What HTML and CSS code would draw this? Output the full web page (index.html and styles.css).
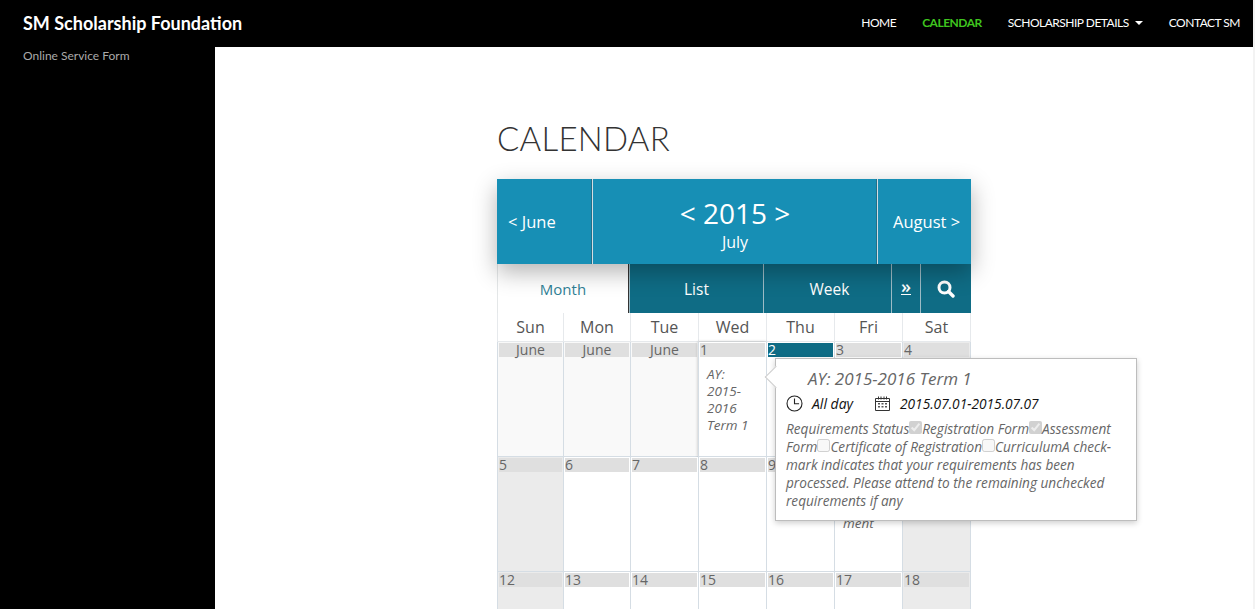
FILE: index.html
```html
<!doctype html>
<html lang="en">

<head>
	<meta charset="UTF-8">
	<title>Calendar - SM Scholarship Foundation</title>
	<link rel="stylesheet" href="styles.css">
</head>

<body>
	<header class="topbar">
		<a class="brand">SM Scholarship Foundation</a>
		<nav class="menu">
			<a>Home</a>
			<a class="current">Calendar</a>
			<a class="has-sub">Scholarship Details</a>
			<a>Contact SM</a>
		</nav>
	</header>

	<div class="shell">
		<aside class="sidebar">
			<p>Online Service Form</p>
		</aside>

		<main class="content">
			<h1>Calendar</h1>

			<section class="cal">
				<div class="cal-nav">
					<a class="prev">&lt; June</a>
					<div class="now">
						<div class="year">&lt; 2015 &gt;</div>
						<div class="month">July</div>
					</div>
					<a class="next">August &gt;</a>
				</div>

				<div class="cal-tabs">
					<a class="tab-month active">Month</a>
					<a class="tab-list">List</a>
					<a class="tab-week">Week</a>
					<a class="tab-more">&raquo;</a>
					<a class="tab-search">
						<svg width="18" height="18" viewBox="0 0 18 18">
							<circle cx="7.500" cy="7.500" r="5.500" fill="none" stroke="#fff" stroke-width="3" />
							<path d="M11.500 11.500 16 16" stroke="#fff" stroke-width="3.400" stroke-linecap="round" />
						</svg>
					</a>
				</div>

				<div class="days">
					<div>Sun</div>
					<div>Mon</div>
					<div>Tue</div>
					<div>Wed</div>
					<div>Thu</div>
					<div>Fri</div>
					<div>Sat</div>
				</div>

				<div class="weeks">
					<div class="cell other"><span class="num">June</span></div>
					<div class="cell other"><span class="num">June</span></div>
					<div class="cell other"><span class="num">June</span></div>
					<div class="cell open"><span class="num left">1</span>
						<p class="ev">AY:<br>2015-<br>2016<br>Term 1</p>
					</div>
					<div class="cell"><span class="num left today">2</span></div>
					<div class="cell"><span class="num left">3</span></div>
					<div class="cell sat"><span class="num left">4</span></div>

					<div class="cell sun"><span class="num left">5</span></div>
					<div class="cell"><span class="num left">6</span></div>
					<div class="cell"><span class="num left">7</span></div>
					<div class="cell"><span class="num left">8</span></div>
					<div class="cell"><span class="num left">9</span></div>
					<div class="cell"><span class="num left">10</span>
						<p class="ev low">ment</p>
					</div>
					<div class="cell sat"><span class="num left">11</span></div>

					<div class="cell sun"><span class="num left">12</span></div>
					<div class="cell"><span class="num left">13</span></div>
					<div class="cell"><span class="num left">14</span></div>
					<div class="cell"><span class="num left">15</span></div>
					<div class="cell"><span class="num left">16</span></div>
					<div class="cell"><span class="num left">17</span></div>
					<div class="cell sat"><span class="num left">18</span></div>
				</div>

				<div class="pop">
					<h3>AY: 2015-2016 Term 1</h3>
					<div class="when">
						<svg width="17" height="17" viewBox="0 0 17 17">
							<circle cx="8.500" cy="8.500" r="7.500" fill="none" stroke="#222" stroke-width="1.100" />
							<path d="M8.500 3.500v5.200h4.600" fill="none" stroke="#222" stroke-width="1.100" />
						</svg>
						<span class="allday">All day</span>
						<svg width="15" height="15" viewBox="0 0 15 15">
							<path d="M.5 2.500h14v12H.5z" fill="none" stroke="#333" />
							<path d="M.5 5.500h14M3.500 .5v3M6 .5v3M9 .5v3M11.500 .5v3" fill="none" stroke="#333" />
							<path d="M3 7h2v1.500H3zM6.500 7h2v1.500h-2zM10 7h2v1.500h-2zM3 10h2v1.500H3zM6.500 10h2v1.500h-2zM10 10h2v1.500h-2z" fill="#555" />
						</svg>
						<span class="range">2015.07.01-2015.07.07</span>
					</div>
					<p>Requirements Status<input type="checkbox" checked disabled>Registration Form<input type="checkbox" checked disabled>Assessment Form<input type="checkbox" disabled>Certificate of Registration<input type="checkbox" disabled>CurriculumA check-mark indicates that your requirements has been processed. Please attend to the remaining unchecked requirements if any</p>
				</div>
			</section>
		</main>
	</div>
</body>

</html>
```

FILE: styles.css
```css
html,
body {
	height: 100%;
	overflow: hidden;
}

body {
	margin: 0;
	padding-right: 2px;
	background: #f3f3f3;
	font: 14px "Lato", sans-serif;
}

.topbar {
	display: flex;
	justify-content: space-between;
	align-items: center;
	height: 45px;
	padding: 0 13px 2px 23px;
	background: #000;
	color: #fff;
}

.brand {
	font-size: 18px;
	font-weight: 700;
}

.menu {
	display: flex;
	gap: 26px;
	font-size: 12px;
	letter-spacing: -.5px;
	text-transform: uppercase;
}

.menu .current {
	color: #3fc51f;
	font-weight: 700;
}

.has-sub::after {
	content: "";
	display: inline-block;
	margin-left: 6px;
	vertical-align: 2px;
	border: 4px solid transparent;
	border-top-color: #fff;
	border-bottom: 0;
}

.shell {
	display: flex;
	height: 562px;
}

.sidebar {
	width: 215px;
	flex: none;
	background: #000;
	color: #aaa;
	font-size: 12px;
}

.sidebar p {
	margin: 1px 0 0 23px;
}

.content {
	flex: 1;
	background: #fff;
	padding: 0 0 0 282px;
	font-family: "Open Sans", sans-serif;
}

.content h1 {
	margin: 0;
	padding-top: 71px;
	height: 61px;
	font: 300 33px/40px "Lato", sans-serif;
	letter-spacing: .25px;
	color: #333;
	text-transform: uppercase;
}

.cal {
	position: relative;
	width: 474px;
}

.cal-nav {
	position: relative;
	z-index: 1;
	display: flex;
	height: 85px;
	background: #178fb5;
	color: #fff;
	box-shadow: 0 8px 22px rgba(0, 0, 0, .3);
}

.cal-nav a {
	font-size: 16.500px;
	line-height: 86px;
}

.prev {
	box-sizing: border-box;
	width: 95px;
	padding-left: 11px;
}

.next {
	box-sizing: border-box;
	width: 93px;
	padding-left: 15px;
}

.now {
	flex: 1;
	border: solid #d3dde2;
	border-width: 0 1px;
	box-shadow: -1px 0 0 #226f88, inset -1px 0 0 #226f88;
	text-align: center;
}

.year {
	margin-top: 17px;
	font-size: 28px;
	line-height: 35px;
}

.month {
	font-size: 16px;
	line-height: 22px;
}

.cal-tabs {
	display: flex;
	height: 49px;
	background: #0f6c85;
	color: #fff;
	font-size: 15.500px;
	line-height: 50px;
	text-align: center;
}

.cal-tabs a {
	box-sizing: border-box;
	border-left: 1px solid #9dbcc6;
}

.cal-tabs .active {
	background: #fff;
	color: #2f7f96;
	font-size: 15px;
	border-left: 1px solid #e4e7e8;
	border-right: 1px solid #333;
}

.tab-month {
	width: 132px;
}

.tab-list {
	width: 134px;
}

.tab-week {
	width: 128px;
	padding-left: 4px;
}

.tab-more {
	width: 29px;
	font-size: 18px;
	line-height: 44px;
	font-weight: 600;
	text-decoration: underline;
}

.tab-search {
	width: 51px;
}

.tab-search svg {
	vertical-align: -3px;
}

.days,
.weeks {
	display: grid;
	grid-template-columns: 66px 67px 68px 68px 68px 68px 69px;
}

.days div {
	height: 28px;
	border-left: 1px solid #e6e9ec;
	border-bottom: 1px solid #e6e9ec;
	color: #555;
	font-size: 16px;
	line-height: 28px;
	text-align: center;
}

.days div:last-child {
	border-right: 1px solid #e6e9ec;
}

.cell {
	height: 113px;
	border-left: 1px solid #d5dde4;
	border-bottom: 1px solid #d5dde4;
	padding: 1px 1px 0 1px;
	background: #fff;
}

.cell:nth-child(7n) {
	border-right: 1px solid #d5dde4;
}

.other {
	background: #f9f9f9;
}

.sun,
.sat {
	background: #ebebeb;
}

.open {
	box-shadow: 0 0 3px rgba(0, 0, 0, .25);
}

.num {
	display: block;
	height: 14px;
	background: #dfdfdf;
	color: #666;
	font-size: 14px;
	line-height: 14px;
	text-align: center;
}

.num.left {
	text-align: left;
}

.num.today {
	background: #0f6c85;
	color: #fff;
}

.ev {
	margin: 9px 0 0 7px;
	color: #666;
	font-size: 13.500px;
	font-style: italic;
	line-height: 17px;
}

.ev.low {
	margin-top: 43px;
}

.pop {
	position: absolute;
	z-index: 2;
	left: 278px;
	top: 179px;
	box-sizing: border-box;
	width: 362px;
	height: 163px;
	padding: 9px 10px 0;
	background: #fff;
	border: 1px solid #bdbdbd;
	box-shadow: 0 2px 6px rgba(0, 0, 0, .2);
	color: #666;
	font-style: italic;
}

.pop::before {
	content: "";
	position: absolute;
	left: -8px;
	top: 10px;
	width: 15px;
	height: 15px;
	background: #fff;
	border: solid #ccc;
	border-width: 0 0 1px 1px;
	transform: rotate(45deg);
}

.pop h3 {
	position: relative;
	margin: 0 0 0 22px;
	font-size: 17px;
	font-weight: 400;
	line-height: 22px;
}

.when {
	position: relative;
	display: flex;
	align-items: center;
	margin-top: 4px;
	height: 18px;
	color: #111;
	font-size: 14px;
}

.allday {
	margin: 0 22px 0 9px;
}

.when svg:nth-of-type(2) {
	margin-right: 10px;
}

.range {
	font-size: 13.700px;
}

.pop p {
	margin: 8px 0 0;
	font-size: 13.600px;
	line-height: 18px;
}

.pop input {
	margin: 0;
	width: 13px;
	height: 13px;
}
```
